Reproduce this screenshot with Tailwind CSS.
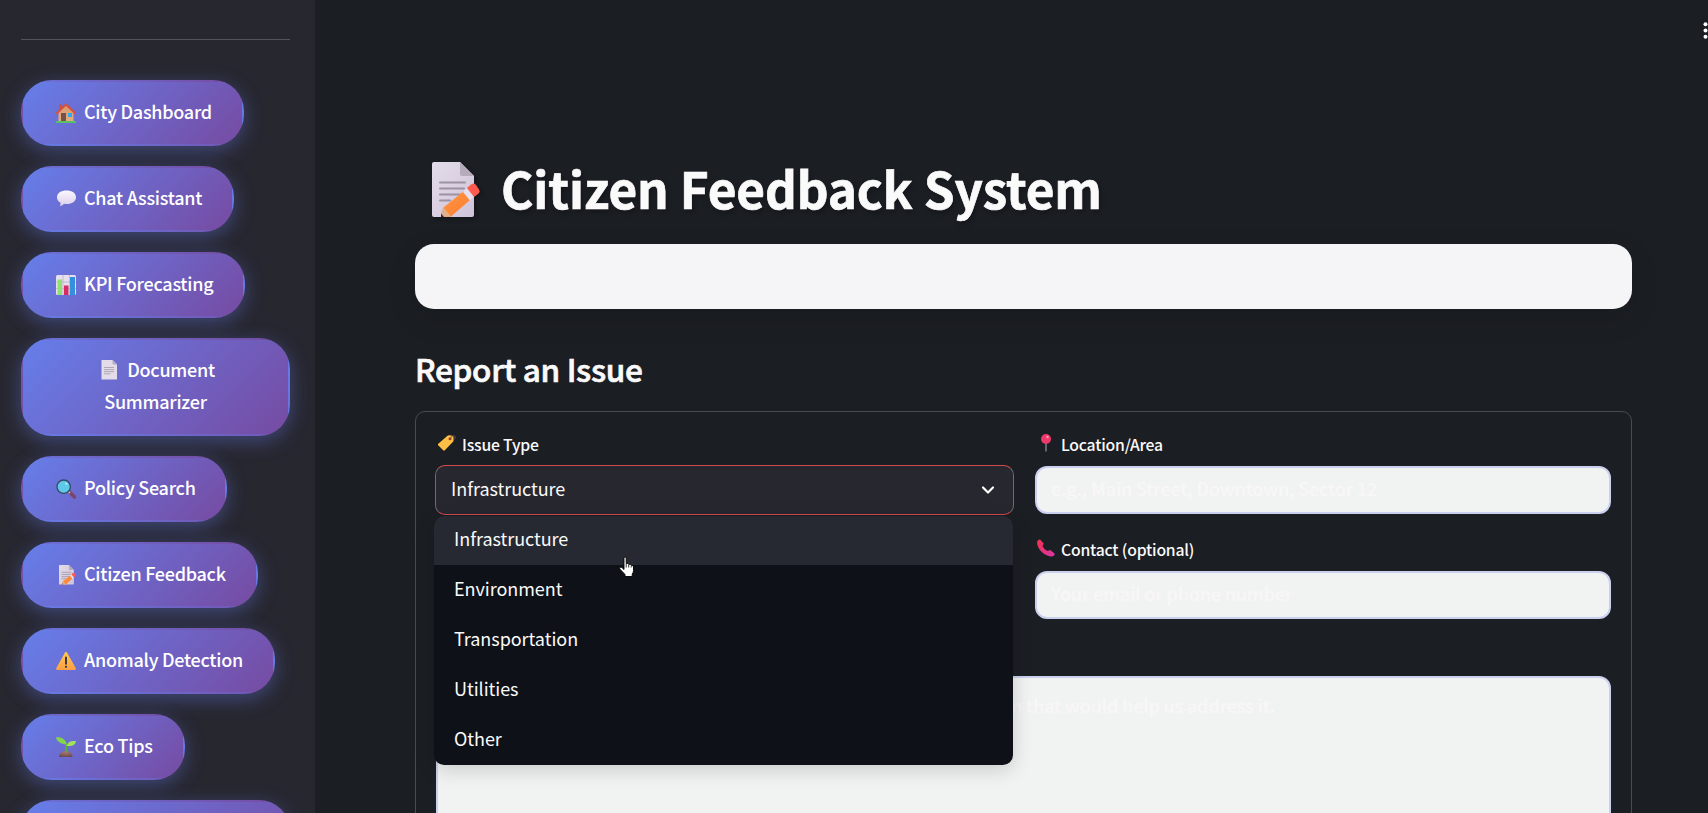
<!DOCTYPE html>
<html lang="en">
<head>
<meta charset="utf-8">
<title>Citizen Feedback System</title>
<script src="https://cdn.jsdelivr.net/npm/@tailwindcss/browser@4"></script>
</head>
<body class="h-[813px] w-[1708px] overflow-hidden bg-[#1b1e23] text-[#fafafa] font-['Noto_Sans_CJK_SC',sans-serif]">
<svg width="0" height="0" class="absolute">
  <defs>
    <linearGradient id="gp" x1="0" y1="0" x2="1" y2="1"><stop offset="0" stop-color="#e4dce9"/><stop offset="1" stop-color="#cfc3da"/></linearGradient>
    <linearGradient id="go" x1="0" y1="0" x2="1" y2="1"><stop offset="0" stop-color="#ff9a3e"/><stop offset="1" stop-color="#ff7a35"/></linearGradient>
    <linearGradient id="gw" x1="0" y1="0" x2="0" y2="1"><stop offset="0" stop-color="#d79a6c"/><stop offset="1" stop-color="#e3ae84"/></linearGradient>
    <linearGradient id="gy" x1="0" y1="0" x2="0" y2="1"><stop offset="0" stop-color="#ffc94a"/><stop offset="1" stop-color="#ff9f45"/></linearGradient>
    <linearGradient id="gph" x1="0" y1="0" x2="1" y2="1"><stop offset="0" stop-color="#f0324e"/><stop offset="1" stop-color="#d936a8"/></linearGradient>
    <linearGradient id="gb" x1="0" y1="0" x2="0" y2="1"><stop offset="0" stop-color="#fbf7ff"/><stop offset="1" stop-color="#ddd0ea"/></linearGradient>
    <radialGradient id="gs" cx=".5" cy=".2" r=".8"><stop offset="0" stop-color="#a57a6c"/><stop offset="1" stop-color="#6d4a4c"/></radialGradient>
    <symbol id="memo" viewBox="0 0 48 56">
      <path d="M2 0H28L42 14V53a2 2 0 0 1-2 2H2a2 2 0 0 1-2-2V2A2 2 0 0 1 2 0Z" fill="url(#gp)"/>
      <path d="M28 0 42 14H30a2 2 0 0 1-2-2Z" fill="#b5abba"/>
      <path d="M8 20.500H33M8 26.500H32M8 32.500H28M8 38.500H18" stroke="#9c92a2" stroke-width="2" stroke-linecap="round"/>
      <path d="M9 52 12 45 32 29 38 38 19 54.500 9 55Z" fill="url(#go)"/>
      <path d="M11.500 45.500 19 54.500 9 55V51Z" fill="#e0b08c"/><path d="M9 51.500 12 55H9Z" fill="#4a2038"/>
      <path d="M31 30 35 26 42 34.500 38 38.500Z" fill="#e5dff0"/>
      <path d="M35 26 39 22.500Q42 20.500 44 23L47 27.500Q48.500 30 46 32L42 35Z" fill="#ff5a4d"/>
    </symbol>
    <symbol id="house" viewBox="0 0 20 20">
      <rect x="3" y="1.500" width="3" height="6" fill="#d9502f"/>
      <path d="M2.500 9.500 10 2.500 17.500 9.500V18.500H2.500Z" fill="url(#gw)"/>
      <path d="M.8 10.200 10 1.500 19.200 10.200" fill="none" stroke="#d8513c" stroke-width="2" stroke-linejoin="round" stroke-linecap="round"/>
      <rect x="5" y="10" width="5" height="8.500" fill="#77504a"/><rect x="12" y="10" width="4" height="4" fill="#35a9ee"/>
      <rect x="0" y="18" width="20" height="2" rx=".6" fill="#57c163"/>
    </symbol>
    <symbol id="chat" viewBox="0 0 20 20">
      <path d="M10.500 1.500c5.500 0 9.500 2.700 9.500 6.700S16 15 10.500 15c-.9 0-1.700 0-2.500-.2C7 16.200 5.500 16.900 3.700 16.800c.8-.9 1-1.800.8-3C2.300 12.600 1 10.900 1 8.200 1 4.200 5 1.500 10.500 1.500Z" fill="url(#gb)"/>
    </symbol>
    <symbol id="chart" viewBox="0 0 20 20">
      <rect width="20" height="20" rx="1.500" fill="#e6dfec"/>
      <path d="M0 7H20M0 13.500H20M7 0V20M13.500 0V20" stroke="#bbb1c6" stroke-width=".8"/>
      <rect x="1.500" y="4.500" width="4.500" height="15.500" fill="#8fe272"/><rect x="8" y="10.500" width="4.500" height="9.500" fill="#d62c62"/><rect x="14" y="2" width="5" height="18" fill="#3390de"/>
    </symbol>
    <symbol id="page" viewBox="0 0 20 20">
      <path d="M2.500 0H13.500L18 4.500V19.500H2.500Z" fill="#e5dcea"/><path d="M13.500 0 18 4.500H14.500a1 1 0 0 1-1-1Z" fill="#b7adbd"/>
      <path d="M5 7.500H15M5 9.700H15M5 11.700H15M5 13.800H11.500" stroke="#aaa0b0" stroke-width=".9"/>
    </symbol>
    <symbol id="search" viewBox="0 0 20 20">
      <path d="M13.500 13 18.500 18" stroke="#7d4368" stroke-width="3.600" stroke-linecap="round"/>
      <path d="M11.800 11.800 14 14" stroke="#bfb3c8" stroke-width="1.800"/>
      <circle cx="7.700" cy="7.700" r="6.700" fill="#5fc9e9" stroke="#344b68" stroke-width="1.300"/>
      <ellipse cx="10.300" cy="4.700" rx="1.500" ry="1" fill="#b4ecf8" transform="rotate(35 10.300 4.700)"/>
    </symbol>
    <symbol id="warn" viewBox="0 0 20 20">
      <path d="M9 1.500Q10 .2 11 1.500L19.800 17.200Q20.200 18.800 18.800 19H1.200Q-.2 18.800.2 17.200Z" fill="url(#gy)"/>
      <path d="M10 6.500V12.800" stroke="#35324a" stroke-width="1.900" stroke-linecap="round"/><circle cx="10" cy="15.800" r="1.100" fill="#35324a"/>
    </symbol>
    <symbol id="sprout" viewBox="0 0 20 20">
      <path d="M3 20C3.500 16 6.500 14 9.800 14S16 16 16.500 20Z" fill="url(#gs)"/>
      <path d="M10.500 15V7" stroke="#5fae35" stroke-width="1.800"/>
      <path d="M10.800 7.500C10 2.500 5.500-.2 0 .3.500 4.800 5 7 10.800 7.500Z" fill="#84d548"/>
      <path d="M10.800 9C11.500 5 15 3.800 20 4 19.500 8 16 9.600 10.800 9Z" fill="#a3e35a"/>
    </symbol>
    <symbol id="tag" viewBox="0 0 18 16">
      <path d="M0 9 9.500.8Q10.200.2 11.200.3L14.500.8Q15.400 1 15.500 2L15.600 5.200Q15.600 6.200 14.800 7L6.800 15.300Q6 16 5.200 15.200L.2 10.300Q-.4 9.600 0 9Z" fill="#ffbf45"/>
      <circle cx="12" cy="3.800" r="1.500" fill="#a33a28"/><path d="M12 3.800C13 .8 17.500-.2 17.300 2.500 17.200 4 15.500 5 15.500 5" fill="none" stroke="#6b5669" stroke-width=".9"/>
    </symbol>
    <symbol id="pin" viewBox="0 0 10 18">
      <path d="M5 9V17" stroke="#9c95a8" stroke-width="1.200" stroke-linecap="round"/><circle cx="5" cy="5" r="5" fill="#ee3a6b"/><circle cx="6.500" cy="3" r="1.200" fill="#ff93b0"/>
    </symbol>
    <symbol id="phone" viewBox="0 0 18 18">
      <path d="M.8 1.500Q2-.2 3.300.7L6.300 4Q7 5 6.200 5.800L5.500 6.700Q6.500 10 10.800 12L12.200 11.200Q13 10.800 13.800 11.400L17 14Q18.300 15.200 17 16.400 15.500 18 12.500 17.300C6.500 15.800 1.500 10.800.3 5.500Q-.2 3 .8 1.500Z" fill="url(#gph)"/>
    </symbol>
  </defs>
</svg>
<div class="flex h-full w-full overflow-hidden">
  <aside class="flex h-full w-[315px] shrink-0 flex-col items-start gap-5 overflow-hidden bg-[#272730] pl-[21px] pt-[39px] text-[18px] leading-8 font-medium tracking-[-0.26px] text-white">
    <div class="mb-5 h-px w-[269px] shrink-0 bg-[#52535b]"></div>
    <button class="flex h-[66px] w-[223px] shrink-0 items-center rounded-[31px] border-2 border-transparent bg-linear-[135deg,#667eea_0%,#764ba2_100%] pl-[33px] shadow-[0_5px_19px_rgba(102,126,234,0.4)]"><svg class="-mt-px mr-2 size-5 shrink-0"><use href="#house"/></svg><span class="-mt-[5px] whitespace-nowrap">City Dashboard</span></button>
    <button class="flex h-[66px] w-[213px] shrink-0 items-center rounded-[31px] border-2 border-transparent bg-linear-[135deg,#667eea_0%,#764ba2_100%] pl-[33px] shadow-[0_5px_19px_rgba(102,126,234,0.4)]"><svg class="-mt-px mr-2 size-5 shrink-0"><use href="#chat"/></svg><span class="-mt-[5px] whitespace-nowrap">Chat Assistant</span></button>
    <button class="flex h-[66px] w-[224px] shrink-0 items-center rounded-[31px] border-2 border-transparent bg-linear-[135deg,#667eea_0%,#764ba2_100%] pl-[33px] shadow-[0_5px_19px_rgba(102,126,234,0.4)]"><svg class="-mt-px mr-2 size-5 shrink-0"><use href="#chart"/></svg><span class="-mt-[5px] whitespace-nowrap">KPI Forecasting</span></button>
    <button class="flex h-[98px] w-[269px] shrink-0 flex-col items-center rounded-[31px] border-2 border-transparent bg-linear-[135deg,#667eea_0%,#764ba2_100%] pt-[13px] shadow-[0_5px_19px_rgba(102,126,234,0.4)]"><span class="flex items-center pl-[3px]"><svg class="mr-2 mt-px size-5 shrink-0"><use href="#page"/></svg><span class="whitespace-nowrap">Document</span></span><span>Summarizer</span></button>
    <button class="flex h-[66px] w-[206px] shrink-0 items-center rounded-[31px] border-2 border-transparent bg-linear-[135deg,#667eea_0%,#764ba2_100%] pl-[33px] shadow-[0_5px_19px_rgba(102,126,234,0.4)]"><svg class="-mt-px mr-2 size-5 shrink-0"><use href="#search"/></svg><span class="-mt-[5px] whitespace-nowrap">Policy Search</span></button>
    <button class="flex h-[66px] w-[237px] shrink-0 items-center rounded-[31px] border-2 border-transparent bg-linear-[135deg,#667eea_0%,#764ba2_100%] pl-[33px] shadow-[0_5px_19px_rgba(102,126,234,0.4)]"><svg class="-mt-px mr-2 size-5 shrink-0 pl-[3px]"><use href="#memo"/></svg><span class="-mt-[5px] whitespace-nowrap">Citizen Feedback</span></button>
    <button class="flex h-[66px] w-[254px] shrink-0 items-center rounded-[31px] border-2 border-transparent bg-linear-[135deg,#667eea_0%,#764ba2_100%] pl-[33px] shadow-[0_5px_19px_rgba(102,126,234,0.4)]"><svg class="-mt-px mr-2 size-5 shrink-0"><use href="#warn"/></svg><span class="-mt-[5px] whitespace-nowrap">Anomaly Detection</span></button>
    <button class="flex h-[66px] w-[164px] shrink-0 items-center rounded-[31px] border-2 border-transparent bg-linear-[135deg,#667eea_0%,#764ba2_100%] pl-[33px] shadow-[0_5px_19px_rgba(102,126,234,0.4)]"><svg class="-mt-px mr-2 size-5 shrink-0"><use href="#sprout"/></svg><span class="-mt-[5px] whitespace-nowrap">Eco Tips</span></button>
    <button class="h-[98px] w-[269px] shrink-0 rounded-[31px] border-2 border-transparent bg-linear-[135deg,#667eea_0%,#764ba2_100%] shadow-[0_5px_19px_rgba(102,126,234,0.4)]"></button>
  </aside>

  <main class="relative h-full flex-1 pl-[100px] pt-[154px]">
    <svg class="absolute right-0 top-[21px] h-[19px] w-[5px]" viewBox="0 0 5 19" fill="#fff"><circle cx="2.500" cy="3.300" r="2"/><circle cx="2.500" cy="9.500" r="2"/><circle cx="2.500" cy="15.700" r="2"/></svg>
    <h1 class="flex h-[66px] items-start pl-[17px] text-[49.5px] leading-[68px] font-bold tracking-[-0.13px]"><svg class="mr-[21px] mt-2 h-14 w-12 shrink-0 drop-shadow-[2px_2px_2px_rgba(0,0,0,0.3)]"><use href="#memo"/></svg><span class="whitespace-nowrap [-webkit-text-stroke:0.7px_#fafafa] text-shadow-[2px_3px_5px_rgba(0,0,0,0.3)]">Citizen Feedback System</span></h1>
    <div class="mt-6 h-[65px] w-[1217px] rounded-[19px] bg-[#f5f5f8] shadow-[0_10px_30px_rgba(0,0,0,0.1)]"></div>
    <h3 class="mt-[38px] h-[42px] whitespace-nowrap text-[31.5px] leading-[42px] font-medium tracking-[-0.3px] [-webkit-text-stroke:0.7px_#fafafa]">Report an Issue</h3>
    <form class="mt-[22px] h-[600px] w-[1217px] rounded-[10px] border border-[#494b50] pl-[19px] pt-[18px]">
      <div class="flex h-[246px] gap-[21px]">
        <div class="relative w-[579px]">
          <div class="flex h-7 items-center pl-[3px] text-[15.75px] leading-7 font-medium tracking-[-0.2px]"><svg class="mr-[6px] -mt-0.5 h-4 w-[18px]"><use href="#tag"/></svg><span class="mt-px">Issue Type</span></div>
          <div class="mt-[7px] flex h-[50px] items-center justify-between rounded-[10px] border border-x-[#6d6c75] border-y-[#d34a4e] bg-[#272730] pl-[15px] pr-[17px] text-[18px] tracking-[-0.05px]"><span class="-mt-1">Infrastructure</span><svg class="h-3 w-4" viewBox="0 0 16 12" fill="none" stroke="#fff" stroke-width="2.200" stroke-linecap="round" stroke-linejoin="round"><path d="M3 3.500 8 8.500 13 3.500"/></svg></div>
          <ul class="absolute -left-px top-[86px] z-10 h-[249px] w-[579px] overflow-hidden rounded-[10px] bg-[#0e1117] text-[18px] leading-[46px] tracking-[-0.05px] shadow-[0_5px_20px_rgba(0,0,0,0.16)]">
            <li class="-mt-px h-[50px] bg-[#262932] pl-5">Infrastructure</li>
            <li class="h-[50px] pl-5">Environment</li>
            <li class="h-[50px] pl-5">Transportation</li>
            <li class="h-[50px] pl-5">Utilities</li>
            <li class="h-[50px] pl-5">Other</li>
          </ul>
          <svg class="absolute left-[183px] top-[126px] z-20 h-[22px] w-[17px]" viewBox="0 0 17 22"><path d="M6 2.200Q6 1 7 1T8.200 2.200V7.500Q10.500 7 10.700 8.300 12.800 8 13.200 9.200 15.500 9 15.500 11V14.500Q15.500 16.500 14.200 18V20.500H7V18.500L2 13.200Q1 12 2 11.300T4.200 11.800L6 13.500Z" fill="#fff" stroke="#000" stroke-width=".9"/><path d="M8.200 8V11.500M10.700 8.500V11.500M13.200 9.500V11.500" stroke="#000" stroke-width=".8"/></svg>
        </div>
        <div class="w-[576px]">
          <div class="flex h-7 items-center pl-[2px] text-[15.75px] leading-7 font-medium tracking-[-0.2px]"><svg class="ml-1 mr-[10px] -mt-0.5 h-[18px] w-[10px]"><use href="#pin"/></svg><span class="mt-px">Location/Area</span></div>
          <div class="mt-2 h-12 whitespace-nowrap rounded-xl border-2 border-[#cad0ee] bg-[#f1f3f3] pl-[14px] text-[18px] leading-[41px] font-medium tracking-[-0.13px] text-[#f9f6f7]">e.g., Main Street, Downtown, Sector 12</div>
          <div class="mt-[21px] flex h-7 items-center pl-[2px] text-[15.75px] leading-7 font-medium tracking-[-0.2px]"><svg class="mr-[6px] -mt-0.5 size-[18px]"><use href="#phone"/></svg><span class="mt-px">Contact (optional)</span></div>
          <div class="mt-2 h-12 whitespace-nowrap rounded-xl border-2 border-[#cad0ee] bg-[#f1f3f3] pl-[14px] text-[18px] leading-[40px] font-medium tracking-[-0.13px] text-[#f9f6f7]">Your email or phone number</div>
        </div>
      </div>
      <div class="ml-px h-[200px] w-[1175px] rounded-xl border-2 border-[#cad0ee] bg-[#f1f3f3] pt-[11px]"><p class="w-[837px] whitespace-nowrap text-right text-[18px] leading-8 font-medium tracking-[-0.13px] text-[#f9f6f7]">Please include any relevant information that would help us address it.</p></div>
    </form>
  </main>
</div>
</body>
</html>
